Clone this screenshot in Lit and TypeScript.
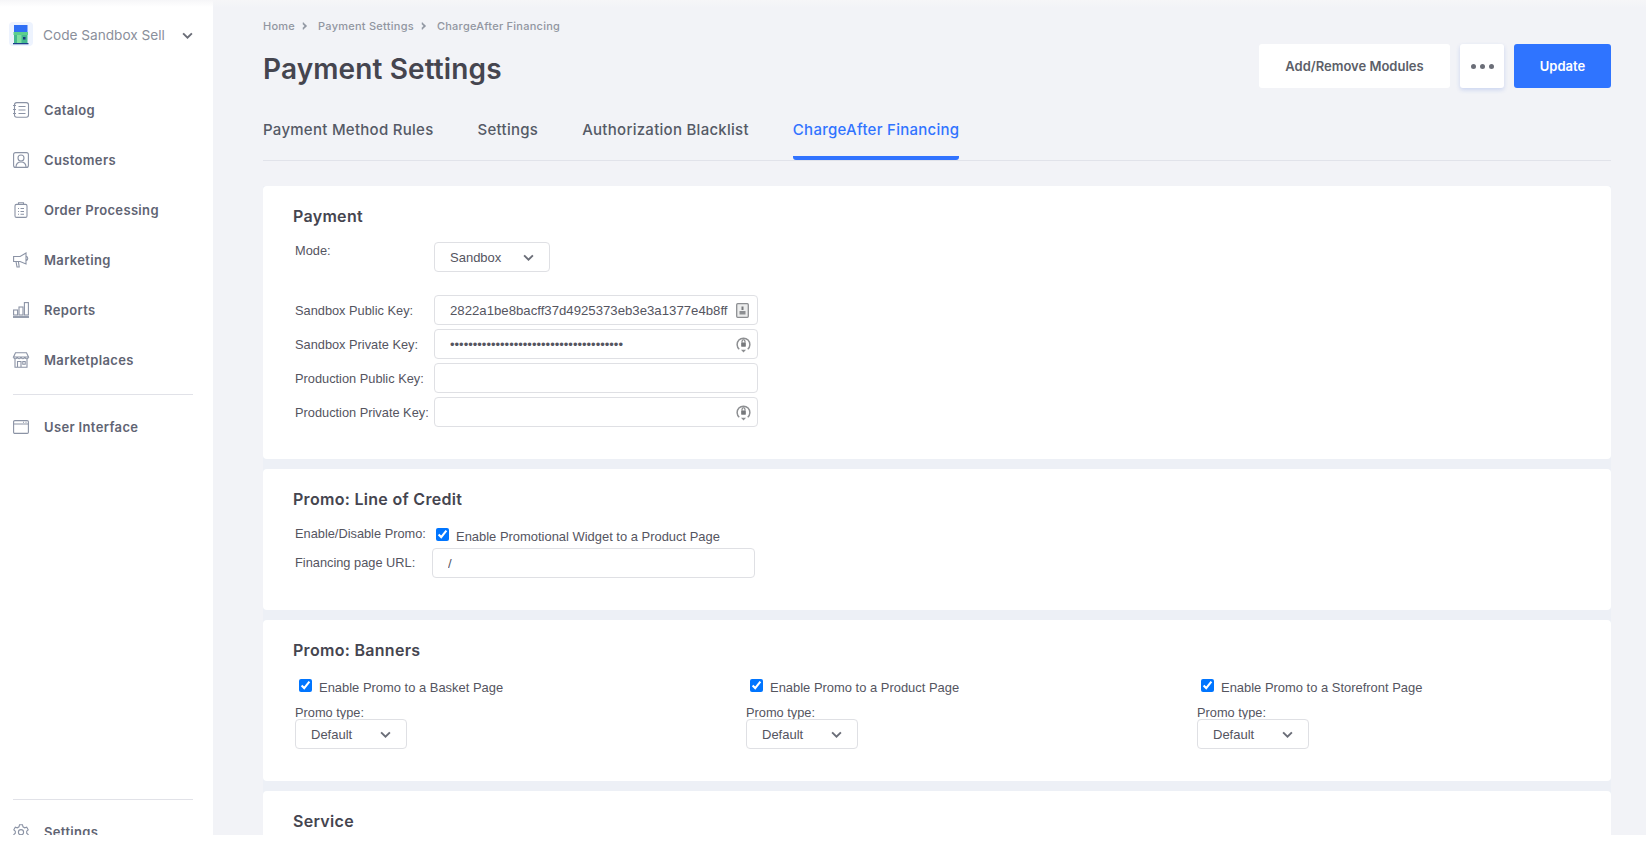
import { LitElement, html, css, svg } from "lit";
import { customElement } from "lit/decorators.js";

const ic = (body: unknown) => html`<svg class="nav-icon" viewBox="0 0 16 16" fill="none" stroke="currentColor" stroke-width="1.1">${body}</svg>`;

const NAV_TOP = [
  { label: "Catalog", icon: ic(svg`<rect x="1.5" y="0.6" width="14" height="14.6" rx="2.2"/><path d="M0 3.5h3M0 7.5h3M0 11.5h3M5.5 4.5h7M5.5 8h7M5.5 11.5h7"/>`) },
  { label: "Customers", icon: ic(svg`<rect x="0.6" y="0.6" width="14.8" height="14.8" rx="2"/><circle cx="8" cy="6" r="3"/><path d="M3 15c0-3.4 2-5 5-5s5 1.6 5 5"/>`) },
  { label: "Order Processing", icon: ic(svg`<rect x="2" y="2.4" width="12" height="13" rx="1.5"/><path d="M5.5 2.4V0.8h5v1.6M5 6.5h1M7.5 6.5H11M5 9.5h1M7.5 9.5H11M5 12.3h1M7.5 12.3H11"/>`) },
  { label: "Marketing", icon: ic(svg`<path d="M0.6 4.5h6.5L13 1v11L7.1 9.5H0.6zM3 9.5l1 5.5h2.2L5.4 9.6M13 4.2c2 .3 2.6 3.6 0 4.4"/>`) },
  { label: "Reports", icon: ic(svg`<rect x="0.6" y="8" width="4" height="5"/><rect x="6" y="5" width="4" height="8"/><rect x="11.4" y="0.6" width="4" height="12.4"/><path d="M0 15h16" stroke-width="1.8"/>`) },
  { label: "Marketplaces", icon: ic(svg`<path d="M2.5 0.8h11L15.5 5H0.5zM0.5 5c.4 2.4 3.2 2.4 3.7 0 .5 2.4 3.3 2.4 3.8 0 .5 2.4 3.3 2.4 3.8 0 .5 2.4 3.3 2.4 3.7 0M2 7v8.2h12V7M4.5 15V9.5h3.5V15M9.8 9.5h2.4v2.8H9.8z"/>`) },
];

const STORE = html`<svg class="logo" viewBox="0 0 24 24">
  <rect width="24" height="24" rx="4" fill="#edf3fe"/>
  <rect x="5" y="3" width="13.5" height="7" fill="#2f6ff5"/>
  <rect x="4.5" y="10" width="14.5" height="3" fill="#5ccf8c"/>
  <rect x="5" y="13" width="13.5" height="8" fill="#45b98e"/>
  <rect x="8" y="13" width="4.5" height="8" fill="#7fe0a0"/>
  <rect x="14" y="15" width="2.5" height="2.5" fill="#173a7a"/>
  <rect x="4" y="21" width="15.5" height="1.3" fill="#1b3f8a"/>
</svg>`;

const CHEV = html`<svg class="chev" viewBox="0 0 10 6" fill="none" stroke="currentColor" stroke-width="1.7"><path d="M1 1l4 4 4-4"/></svg>`;

const KEY_ICON = html`<svg class="field-icon" width="13" height="15" viewBox="0 0 13 15" fill="none">
  <rect x="0.7" y="0.7" width="11.6" height="13.6" rx="1" fill="#eceded" stroke="#8d8f92" stroke-width="1.3"/>
  <rect x="5.5" y="3.5" width="2" height="3.5" fill="#77797c"/><rect x="3.5" y="8" width="6" height="3.5" fill="#8d8f92"/>
</svg>`;

const LOCK_ICON = html`<svg class="field-icon lock" width="15" height="17" viewBox="0 0 14 16" fill="none">
  <path d="M3 12.5A6 6 0 1 1 11 12.5" stroke="#8d8f92" stroke-width="1.4"/>
  <path d="M7 15.5l-2.4-2.6h4.8z" fill="#8d8f92"/>
  <rect x="4.8" y="6.2" width="4.4" height="4" rx="0.8" fill="#77797c"/>
  <path d="M5.6 6.4V5a1.4 1.4 0 0 1 2.8 0v1.4" stroke="#77797c"/>
</svg>`;

const crumbSep = html`<svg class="crumb-sep" viewBox="0 0 6 8"><path d="M1 0.5l3.8 3.5L1 7.5V5.8L2.8 4 1 2.2z" fill="#8f94a0" stroke="#8f94a0" stroke-width=".5"/></svg>`;

@customElement("app-root")
export class AppRoot extends LitElement {
  static styles = css`
    :host { display: flex; height: 835px; overflow: hidden; background: #fff; font-family: Inter, "Liberation Sans", sans-serif; color: #45454f; }
    * { box-sizing: border-box; }

    .side { width: 213px; flex: none; display: flex; flex-direction: column; height: 100%; background: linear-gradient(#f6f6f8, #fff 7px); padding: 22px 20px 0 13px; }
    .brand { display: flex; flex: none; align-items: center; height: 26px; margin-left: -4px; font-size: 13.65px; color: #8a8f9b; white-space: nowrap; }
    .logo { width: 24px; height: 24px; margin-right: 10px; flex: none; align-self: flex-start; }
    .brand-chev { width: 11px; height: 7px; margin-left: auto; color: #555a66; }
    .nav { display: flex; flex-direction: column; margin-top: 37px; flex: none; }
    .item { display: flex; align-items: center; height: 50px; flex: none; gap: 15px; font-size: 13px; font-weight: 600; letter-spacing: 0.35px; color: #5f6473; }
    .nav-icon { width: 16px; height: 16px; flex: none; color: #8b93a5; overflow: visible; }
    .rule { height: 1px; background: #e1e2e8; margin: 9px 0 7px; flex: none; }
    .spacer { height: 347px; flex: none; }
    .rule.bottom { margin: 0 0 7px; }

    .main { flex: 1; min-width: 0; height: 100%; background: linear-gradient(#f6f6f8, #f2f3f7 8px); padding: 19px 35px 0 50px; }
    .head { display: flex; justify-content: space-between; }
    .crumbs { display: flex; align-items: center; height: 14px; font-size: 11px; font-weight: 500; letter-spacing: 0.25px; color: #9196a1; }
    .crumb-sep { width: 6px; height: 8px; margin: 0 10px 0 7px; }
    h1 { margin: 18px 0 0; font-size: 28px; line-height: 36px; font-weight: 600; letter-spacing: 0.12px; color: #45454f; }
    .actions { display: flex; gap: 10px; margin-top: 25px; height: 44px; }
    .btn { display: flex; align-items: center; justify-content: center; border-radius: 3px; background: #fff; font-size: 13px; font-weight: 600; color: #5c5f69; }
    .btn.modules { width: 191px; }
    .btn.more { width: 44px; gap: 4px; box-shadow: 0 2px 4px rgba(70, 110, 220, 0.22); }
    .dot { width: 5px; height: 5px; border-radius: 50%; background: #6b6e78; }
    .btn.update { width: 97px; background: #2f74ff; color: #fff; }

    .tabs { display: flex; gap: 44px; margin-top: 13px; border-bottom: 1px solid #e1e3ea; padding-top: 19px; height: 60px; font-size: 15px; font-weight: 500; letter-spacing: 0.27px; color: #555a66; }
    .tab { height: 40px; line-height: 20px; white-space: nowrap; padding-bottom: 16px; border-bottom: 4px solid transparent; border-radius: 0 0 3px 3px; }
    .tab.on { color: #3173ff; border-bottom-color: #3173ff; }

    .cards { display: flex; flex-direction: column; gap: 10px; margin-top: 25px; background: #edf0f6; }
    .card { background: #fff; border-radius: 4px; padding: 20px 30px 32px; }
    h2 { margin: 0; font-size: 16px; line-height: 20px; font-weight: 600; letter-spacing: 0.3px; color: #45454f; }

    .txt { font-family: "Liberation Sans", Arial, sans-serif; font-size: 12.8px; color: #55555f; }
    .form { display: grid; grid-template-columns: 139px 324px; row-gap: 4px; margin: 16px 0 0 2px; align-items: center; }
    .form .mode-label { align-self: start; line-height: 14px; margin: 2px 0 19px; }
    .select { display: flex; align-items: center; justify-content: space-between; height: 30px; padding: 0 15px; border: 1px solid #dfe0e4; border-radius: 4px; background: #fff; font-family: "Liberation Sans", Arial, sans-serif; font-size: 13px; color: #55555f; }
    .select.mode { width: 116px; justify-self: start; margin-bottom: 19px; }
    .select.promo { width: 112px; }
    .chev { width: 11px; height: 7px; color: #6b6e78; }
    .field { position: relative; height: 30px; }
    .field input { width: 100%; height: 100%; padding: 0 15px; border: 1px solid #dfe0e4; border-radius: 4px; background: #fff; font-family: "Liberation Sans", Arial, sans-serif; font-size: 13.2px; color: #55555f; outline: none; }
    .field input[type="password"] { font-size: 13px; }
    .field-icon { position: absolute; right: 9px; top: 8px; }
    .field-icon.lock { top: 7px; right: 7px; }

    .promo-form { display: grid; grid-template-columns: 137px 323px; margin: 18px 0 0 2px; }
    .promo-form label { line-height: 14px; }
    .check-line { display: flex; align-items: flex-start; font-size: 12.95px; }
    input[type="checkbox"] { width: 13px; height: 13px; margin: 0; flex: none; }
    .check-line input { margin: 1px 7px 0 4px; }
    .check-line span { line-height: 14px; margin-top: 3px; }
    .promo-form .check-line { height: 21px; }
    .promo-form .url { align-self: center; }

    .cols { display: grid; grid-template-columns: repeat(3, 451px); margin: 19px 0 0 2px; }
    .col { display: flex; flex-direction: column; align-items: flex-start; }
    .col .check-line { height: 27px; }
    .col .check-line input { margin: 0 7px 0 4px; }
    .col .check-line span { margin-top: 2px; }
    .col label { line-height: 14px; height: 13px; }
  `;

  render() {
    return html`
      <aside class="side">
        <div class="brand">${STORE}<span>Code Sandbox Sell</span><svg class="chev brand-chev" viewBox="0 0 10 6" fill="none" stroke="currentColor" stroke-width="1.7"><path d="M1 1l4 4 4-4"/></svg></div>
        <nav class="nav">
          ${NAV_TOP.map((n) => html`<div class="item">${n.icon}<span>${n.label}</span></div>`)}
          <div class="rule"></div>
          <div class="item">${ic(svg`<rect x="0.6" y="1.6" width="14.8" height="12.8" rx="1.2"/><path d="M0.6 5h14.8M10 3.3h1M12.5 3.3h1"/>`)}<span>User Interface</span></div>
        </nav>
        <div class="spacer"></div>
        <div class="rule bottom"></div>
        <div class="item">${ic(svg`<path d="M6.5 0.8h3l.5 2 1.7 1 2-.6 1.5 2.6-1.5 1.4v2l1.5 1.4-1.5 2.6-2-.6-1.7 1-.5 2h-3l-.5-2-1.700-1-2 .6L0.800 10.600 2.300 9.200v-2L0.800 5.800l1.500-2.600 2 .6 1.700-1z"/><circle cx="8" cy="8.200" r="2.600"/>`)}<span>Settings</span></div>
      </aside>
      <main class="main">
        <div class="head">
          <div>
            <div class="crumbs"><span>Home</span>${crumbSep}<span>Payment Settings</span>${crumbSep}<span>ChargeAfter Financing</span></div>
            <h1>Payment Settings</h1>
          </div>
          <div class="actions">
            <div class="btn modules">Add/Remove Modules</div>
            <div class="btn more"><span class="dot"></span><span class="dot"></span><span class="dot"></span></div>
            <div class="btn update">Update</div>
          </div>
        </div>
        <div class="tabs">
          <div class="tab">Payment Method Rules</div>
          <div class="tab">Settings</div>
          <div class="tab">Authorization Blacklist</div>
          <div class="tab on">ChargeAfter Financing</div>
        </div>
        <div class="cards">
          <section class="card">
            <h2>Payment</h2>
            <div class="form">
              <label class="txt mode-label">Mode:</label>
              <div class="select mode"><span>Sandbox</span>${CHEV}</div>
              <label class="txt">Sandbox Public Key:</label>
              <div class="field"><input type="text" .value=${"2822a1be8bacff37d4925373eb3e3a1377e4b8ff"} />${KEY_ICON}</div>
              <label class="txt">Sandbox Private Key:</label>
              <div class="field"><input type="password" .value=${"01234567890123456789012345678901234567"} />${LOCK_ICON}</div>
              <label class="txt">Production Public Key:</label>
              <div class="field"><input type="text" /></div>
              <label class="txt">Production Private Key:</label>
              <div class="field"><input type="password" />${LOCK_ICON}</div>
            </div>
          </section>
          <section class="card">
            <h2>Promo: Line of Credit</h2>
            <div class="promo-form">
              <label class="txt">Enable/Disable Promo:</label>
              <div class="check-line txt"><input type="checkbox" checked /><span>Enable Promotional Widget to a Product Page</span></div>
              <label class="txt url">Financing page URL:</label>
              <div class="field"><input type="text" .value=${"/"} /></div>
            </div>
          </section>
          <section class="card">
            <h2>Promo: Banners</h2>
            <div class="cols">
              ${["Basket", "Product", "Storefront"].map((p) => html`
                <div class="col">
                  <div class="check-line txt"><input type="checkbox" checked /><span>Enable Promo to a ${p} Page</span></div>
                  <label class="txt">Promo type:</label>
                  <div class="select promo"><span>Default</span>${CHEV}</div>
                </div>`)}
            </div>
          </section>
          <section class="card">
            <h2>Service</h2>
          </section>
        </div>
      </main>
    `;
  }
}
